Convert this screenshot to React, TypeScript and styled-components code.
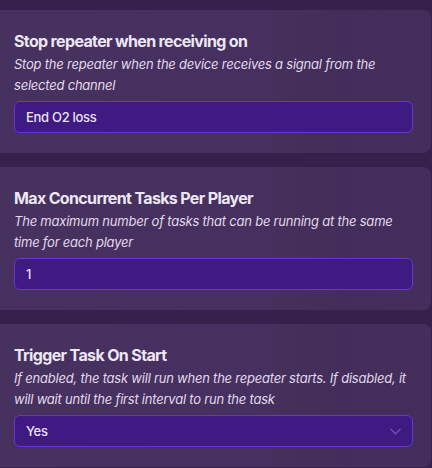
import React from 'react'
import styled, { createGlobalStyle } from 'styled-components'

const GlobalStyle = createGlobalStyle`
  html, body {
    margin: 0;
    padding: 0;
    background: #36214c;
    font-family: Inter, "Noto Sans", sans-serif;
  }
`

const Page = styled.div`
  display: flex;
  flex-direction: column;
  gap: 14px;
  padding: 10px 1px 0 0;
  height: 468px;
  box-sizing: border-box;
  overflow: hidden;
`

const Card = styled.div`
  margin-left: -10px;
  padding: 21px 18px 20px 24px;
  border-radius: 0 8px 8px 0;
  background: linear-gradient(90deg, #46315f 0%, #46305f 62%, #45305c 66%, #432d5a 80%, #442f5c 100%);
  display: flex;
  flex-direction: column;
`

const Title = styled.div`
  color: #ede7f3;
  font-size: 16px;
  font-weight: 700;
  line-height: 20px;
  letter-spacing: -0.65px;
`

const Description = styled.div`
  margin-top: 3px;
  color: #e2d9ec;
  font-size: 13px;
  font-style: italic;
  line-height: 21px;
  letter-spacing: -0.22px;
`

const Field = styled.div`
  margin-top: 5px;
  height: 32px;
  box-sizing: border-box;
  border: 1px solid #6a33d4;
  border-radius: 6px;
  background: #3e1a82;
  display: flex;
  align-items: center;
  justify-content: space-between;
  padding: 0 11px 0 11px;
  color: #ebe3f5;
  font-size: 13px;
  font-weight: 500;
  letter-spacing: -0.3px;
`

const Chevron = () => (
  <svg width="11" height="7" viewBox="0 0 11 7" fill="none">
    <path d="M0.5 0.8 L5.5 6 L10.5 0.8" stroke="#7a5cb3" strokeWidth="1.1" />
  </svg>
)

const settings = [
  {
    title: 'Stop repeater when receiving on',
    description: 'Stop the repeater when the device receives a signal from the selected channel',
    value: 'End O2 loss',
    select: false,
  },
  {
    title: 'Max Concurrent Tasks Per Player',
    description: 'The maximum number of tasks that can be running at the same time for each player',
    value: '1',
    select: false,
  },
  {
    title: 'Trigger Task On Start',
    description:
      'If enabled, the task will run when the repeater starts. If disabled, it will wait until the first interval to run the task',
    value: 'Yes',
    select: true,
  },
]

const App = () => {
  return (
    <Page>
      <GlobalStyle />
      {settings.map((s) => (
        <Card key={s.title}>
          <Title>{s.title}</Title>
          <Description>{s.description}</Description>
          <Field>
            <span>{s.value}</span>
            {s.select && <Chevron />}
          </Field>
        </Card>
      ))}
    </Page>
  )
}

export default App
